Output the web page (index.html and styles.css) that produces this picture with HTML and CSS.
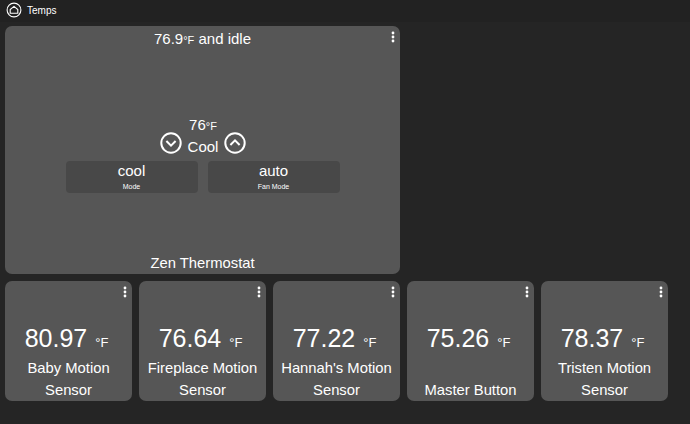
FILE: index.html
```html
<!DOCTYPE html>
<html lang="en">
<head>
<meta charset="utf-8">
<title>Temps</title>
<link rel="stylesheet" href="styles.css">
</head>
<body>
<header class="topbar">
  <svg class="home" viewBox="0 0 16 16" width="16" height="16" aria-hidden="true">
    <circle cx="8" cy="8" r="6.9" fill="none" stroke="#fff" stroke-width="1.1"/>
    <path d="M4.2 11.2V7.6L8 4.4l3.8 3.2v3.6z" fill="none" stroke="#fff" stroke-width="1.1"/>
  </svg>
  <span class="title">Temps</span>
</header>
<main class="dash">
  <section class="card thermostat">
    <svg class="dots" viewBox="0 0 4 12" width="4" height="12" aria-hidden="true"><circle cx="2" cy="2" r="1.4"/><circle cx="2" cy="6" r="1.4"/><circle cx="2" cy="10" r="1.4"/></svg>
    <div class="status">76.9<span class="unit-sm">°F</span> and idle</div>
    <div class="control">
      <div class="target">76<span class="unit-sm">°F</span></div>
      <div class="modeline">
        <svg class="chev" viewBox="0 0 22 22" width="22" height="22" aria-hidden="true"><circle cx="11" cy="11" r="9.7"/><path d="M6.4 9l4.6 4.6L15.6 9"/></svg>
        <span>Cool</span>
        <svg class="chev" viewBox="0 0 22 22" width="22" height="22" aria-hidden="true"><circle cx="11" cy="11" r="9.7"/><path d="M6.4 13L11 8.4 15.6 13"/></svg>
      </div>
      <div class="modes">
        <div class="mode"><div class="mode-val">cool</div><div class="mode-lbl">Mode</div></div>
        <div class="mode"><div class="mode-val">auto</div><div class="mode-lbl">Fan Mode</div></div>
      </div>
    </div>
    <div class="name">Zen Thermostat</div>
  </section>
  <div class="sensors">
    <section class="card sensor">
      <svg class="dots" viewBox="0 0 4 12" width="4" height="12" aria-hidden="true"><circle cx="2" cy="2" r="1.4"/><circle cx="2" cy="6" r="1.4"/><circle cx="2" cy="10" r="1.4"/></svg>
      <div class="reading"><span class="value">80.97</span><span class="unit">°F</span></div>
      <div class="label">Baby Motion Sensor</div>
    </section>
    <section class="card sensor">
      <svg class="dots" viewBox="0 0 4 12" width="4" height="12" aria-hidden="true"><circle cx="2" cy="2" r="1.4"/><circle cx="2" cy="6" r="1.4"/><circle cx="2" cy="10" r="1.4"/></svg>
      <div class="reading"><span class="value">76.64</span><span class="unit">°F</span></div>
      <div class="label">Fireplace Motion Sensor</div>
    </section>
    <section class="card sensor">
      <svg class="dots" viewBox="0 0 4 12" width="4" height="12" aria-hidden="true"><circle cx="2" cy="2" r="1.4"/><circle cx="2" cy="6" r="1.4"/><circle cx="2" cy="10" r="1.4"/></svg>
      <div class="reading"><span class="value">77.22</span><span class="unit">°F</span></div>
      <div class="label">Hannah's Motion Sensor</div>
    </section>
    <section class="card sensor">
      <svg class="dots" viewBox="0 0 4 12" width="4" height="12" aria-hidden="true"><circle cx="2" cy="2" r="1.4"/><circle cx="2" cy="6" r="1.4"/><circle cx="2" cy="10" r="1.4"/></svg>
      <div class="reading"><span class="value">75.26</span><span class="unit">°F</span></div>
      <div class="label">Master Button</div>
    </section>
    <section class="card sensor">
      <svg class="dots" viewBox="0 0 4 12" width="4" height="12" aria-hidden="true"><circle cx="2" cy="2" r="1.4"/><circle cx="2" cy="6" r="1.4"/><circle cx="2" cy="10" r="1.4"/></svg>
      <div class="reading"><span class="value">78.37</span><span class="unit">°F</span></div>
      <div class="label">Tristen Motion Sensor</div>
    </section>
  </div>
</main>
</body>
</html>
```
FILE: styles.css
```css
* { box-sizing: border-box; }
html, body { margin: 0; height: 100%; }
body {
  background: #252525;
  color: #fff;
  font-family: "Liberation Sans", Arial, sans-serif;
  overflow: hidden;
}
.topbar {
  height: 22px;
  display: flex;
  align-items: center;
  gap: 5px;
  padding: 0 0 2px 6px;
  background: #222;
}
.title { font-size: 10px; }
.dash {
  padding: 4px 5px;
  display: flex;
  flex-direction: column;
  gap: 7px;
}
.card {
  position: relative;
  background: #565656;
  border-radius: 7px;
}
.dots {
  position: absolute;
  top: 5px;
  right: 5px;
  fill: #fff;
}
.thermostat {
  width: 395px;
  height: 248px;
  display: flex;
  flex-direction: column;
  align-items: center;
}
.status { font-size: 15px; line-height: 18px; margin-top: 4px; }
.unit-sm { font-size: 11px; }
.control {
  flex: 1;
  width: 100%;
  display: flex;
  flex-direction: column;
  align-items: center;
  padding-top: 68px;
}
.target { font-size: 15px; line-height: 16px; margin-bottom: -2px; padding-left: 1px; }
.modeline {
  display: flex;
  align-items: center;
  gap: 6px;
  font-size: 15px;
  line-height: 22px;
  padding-left: 1px;
}
.modeline span { position: relative; top: 4px; }
.chev { fill: none; stroke: #fff; stroke-width: 2; }
.modes {
  display: flex;
  gap: 10px;
  margin-top: 7px;
}
.mode {
  width: 132px;
  height: 32px;
  background: #484848;
  border-radius: 4px;
  text-align: center;
}
.mode-val { font-size: 15px; line-height: 20px; }
.mode-lbl { font-size: 7px; line-height: 9px; margin-top: 1px; }
.name { font-size: 14.8px; line-height: 18px; margin-bottom: 2px; }
.sensors { display: flex; gap: 7px; }
.sensor {
  width: 127px;
  height: 120px;
  text-align: center;
  padding-top: 41px;
}
.reading {
  height: 32px;
  line-height: 32px;
  white-space: nowrap;
  padding-right: 4px;
}
.value { font-size: 25px; }
.unit { font-size: 13px; margin-left: 8px; }
.label {
  font-size: 14.8px;
  line-height: 22px;
  margin-top: 3px;
  padding: 0 6px;
  min-height: 44px;
  display: flex;
  align-items: flex-end;
  justify-content: center;
}
```
